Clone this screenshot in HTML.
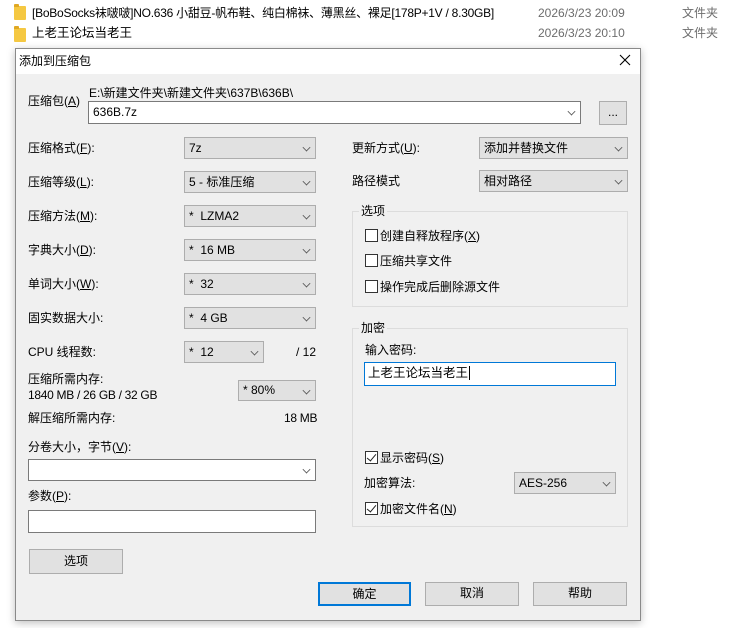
<!DOCTYPE html><html><head><meta charset="utf-8"><style>
*{box-sizing:border-box;margin:0;padding:0}
body{width:732px;height:628px;background:#fff;position:relative;overflow:hidden;font-family:"Liberation Sans","Noto Sans CJK SC",sans-serif;font-size:12px;color:#000}
.a{position:absolute;white-space:nowrap;line-height:14px}
.f{position:absolute;width:12px;height:14px;background:#f5c842;border-radius:1px}
.f:before{content:"";position:absolute;left:0;top:-2px;width:5px;height:3px;background:#e0a823;border-radius:1px 1px 0 0}
.cb{position:absolute;background:#e1e1e1;border:1px solid #adadad;height:22px}
.cw{position:absolute;background:#fff;border:1px solid #7a7a7a;height:22px}
.cb span,.cw span{position:absolute;left:4px;top:3px;white-space:nowrap;line-height:14px}
.cb i,.cw i{position:absolute;right:5px;top:6px;width:7px;height:7px;border-right:1px solid #555;border-bottom:1px solid #555;transform:rotate(45deg) scale(.8);transform-origin:center}
.btn{position:absolute;background:#e1e1e1;border:1px solid #adadad;text-align:center;line-height:21px}
.gb{position:absolute;border:1px solid #dcdcdc}
.ck{position:absolute;width:13px;height:13px;border:1px solid #333;background:#fff}
.ck.on:after{content:"";position:absolute;left:3px;top:0px;width:4px;height:8px;border-right:1.3px solid #222;border-bottom:1.3px solid #222;transform:rotate(40deg)}
</style></head><body>
<div class="f" style="left:14px;top:6px"></div>
<div class="a" style="left:32px;top:6px;font-size:12px;letter-spacing:-0.25px">[BoBoSocks袜啵啵]NO.636 小甜豆-帆布鞋、纯白棉袜、薄黑丝、裸足[178P+1V / 8.30GB]</div>
<div class="a" style="left:538px;top:6px;color:#6d6d6d">2026/3/23 20:09</div>
<div class="a" style="left:682px;top:6px;color:#6d6d6d">文件夹</div>
<div class="f" style="left:14px;top:28px"></div>
<div class="a" style="left:32px;top:26px;font-size:12.5px">上老王论坛当老王</div>
<div class="a" style="left:538px;top:26px;color:#6d6d6d">2026/3/23 20:10</div>
<div class="a" style="left:682px;top:26px;color:#6d6d6d">文件夹</div>

<div style="position:absolute;left:15px;top:48px;width:626px;height:573px;background:#f0f0f0;border:1px solid #8a8a8a;box-shadow:0 2px 8px rgba(0,0,0,.25)">
<div style="position:absolute;left:0;top:0;right:0;height:25px;background:#fff"></div>
</div>
<div class="a" style="left:19px;top:54px">添加到压缩包</div>
<svg style="position:absolute;left:619px;top:54px" width="12" height="12"><path d="M1 1L11 11M11 1L1 11" stroke="#000" stroke-width="1.1"/></svg>

<div class="a" style="left:28px;top:94px">压缩包(<u>A</u>)</div>
<div class="a" style="left:89px;top:86px">E:\新建文件夹\新建文件夹\637B\636B\</div>
<div class="cw" style="left:88px;top:101px;width:493px;height:23px"><span>636B.7z</span><i></i></div>
<div class="btn" style="left:599px;top:101px;width:28px;height:24px;line-height:20px">...</div>

<div class="a" style="left:28px;top:141px">压缩格式(<u>F</u>):</div>
<div class="cb" style="left:184px;top:137px;width:132px"><span>7z</span><i></i></div>
<div class="a" style="left:28px;top:175px">压缩等级(<u>L</u>):</div>
<div class="cb" style="left:184px;top:171px;width:132px"><span>5 - 标准压缩</span><i></i></div>
<div class="a" style="left:28px;top:209px">压缩方法(<u>M</u>):</div>
<div class="cb" style="left:184px;top:205px;width:132px"><span>*&nbsp; LZMA2</span><i></i></div>
<div class="a" style="left:28px;top:243px">字典大小(<u>D</u>):</div>
<div class="cb" style="left:184px;top:239px;width:132px"><span>*&nbsp; 16 MB</span><i></i></div>
<div class="a" style="left:28px;top:277px">单词大小(<u>W</u>):</div>
<div class="cb" style="left:184px;top:273px;width:132px"><span>*&nbsp; 32</span><i></i></div>
<div class="a" style="left:28px;top:311px">固实数据大小:</div>
<div class="cb" style="left:184px;top:307px;width:132px"><span>*&nbsp; 4 GB</span><i></i></div>
<div class="a" style="left:28px;top:345px">CPU 线程数:</div>
<div class="cb" style="left:184px;top:341px;width:80px"><span>*&nbsp; 12</span><i></i></div>
<div class="a" style="left:296px;top:345px">/ 12</div>
<div class="a" style="left:28px;top:372px">压缩所需内存:</div>
<div class="a" style="left:28px;top:388px;letter-spacing:-0.3px">1840 MB / 26 GB / 32 GB</div>
<div class="cb" style="left:238px;top:380px;width:78px;height:21px"><span style="top:2px">* 80%</span><i></i></div>
<div class="a" style="left:28px;top:411px">解压缩所需内存:</div>
<div class="a" style="left:284px;top:411px;letter-spacing:-0.3px">18 MB</div>
<div class="a" style="left:28px;top:440px">分卷大小，字节(<u>V</u>):</div>
<div class="cw" style="left:28px;top:459px;width:288px"><i></i></div>
<div class="a" style="left:28px;top:489px">参数(<u>P</u>):</div>
<div class="cw" style="left:28px;top:510px;width:288px;height:23px"></div>
<div class="btn" style="left:29px;top:549px;width:94px;height:25px;line-height:23px">选项</div>

<div class="a" style="left:352px;top:141px">更新方式(<u>U</u>):</div>
<div class="cb" style="left:479px;top:137px;width:149px"><span>添加并替换文件</span><i></i></div>
<div class="a" style="left:352px;top:174px">路径模式</div>
<div class="cb" style="left:479px;top:170px;width:149px"><span>相对路径</span><i></i></div>

<div class="gb" style="left:352px;top:211px;width:276px;height:96px"></div>
<div class="a" style="left:359px;top:204px;background:#f0f0f0;padding:0 2px">选项</div>
<div class="ck" style="left:365px;top:229px"></div><div class="a" style="left:380px;top:229px">创建自释放程序(<u>X</u>)</div>
<div class="ck" style="left:365px;top:254px"></div><div class="a" style="left:380px;top:254px">压缩共享文件</div>
<div class="ck" style="left:365px;top:280px"></div><div class="a" style="left:380px;top:280px">操作完成后删除源文件</div>

<div class="gb" style="left:352px;top:328px;width:276px;height:199px"></div>
<div class="a" style="left:359px;top:321px;background:#f0f0f0;padding:0 2px">加密</div>
<div class="a" style="left:365px;top:343px">输入密码:</div>
<div style="position:absolute;left:364px;top:362px;width:252px;height:24px;background:#fff;border:1px solid #0078d7"></div>
<div class="a" style="left:368px;top:366px;font-size:12.5px">上老王论坛当老王<span style="border-left:1px solid #000;margin-left:1px"></span></div>
<div class="ck on" style="left:365px;top:451px"></div><div class="a" style="left:380px;top:451px">显示密码(<u>S</u>)</div>
<div class="a" style="left:364px;top:476px">加密算法:</div>
<div class="cb" style="left:514px;top:472px;width:102px"><span>AES-256</span><i></i></div>
<div class="ck on" style="left:365px;top:502px"></div><div class="a" style="left:380px;top:502px">加密文件名(<u>N</u>)</div>

<div class="btn" style="left:318px;top:582px;width:93px;height:24px;border:2px solid #0078d7;line-height:20px">确定</div>
<div class="btn" style="left:425px;top:582px;width:94px;height:24px">取消</div>
<div class="btn" style="left:533px;top:582px;width:94px;height:24px">帮助</div>
</body></html>
